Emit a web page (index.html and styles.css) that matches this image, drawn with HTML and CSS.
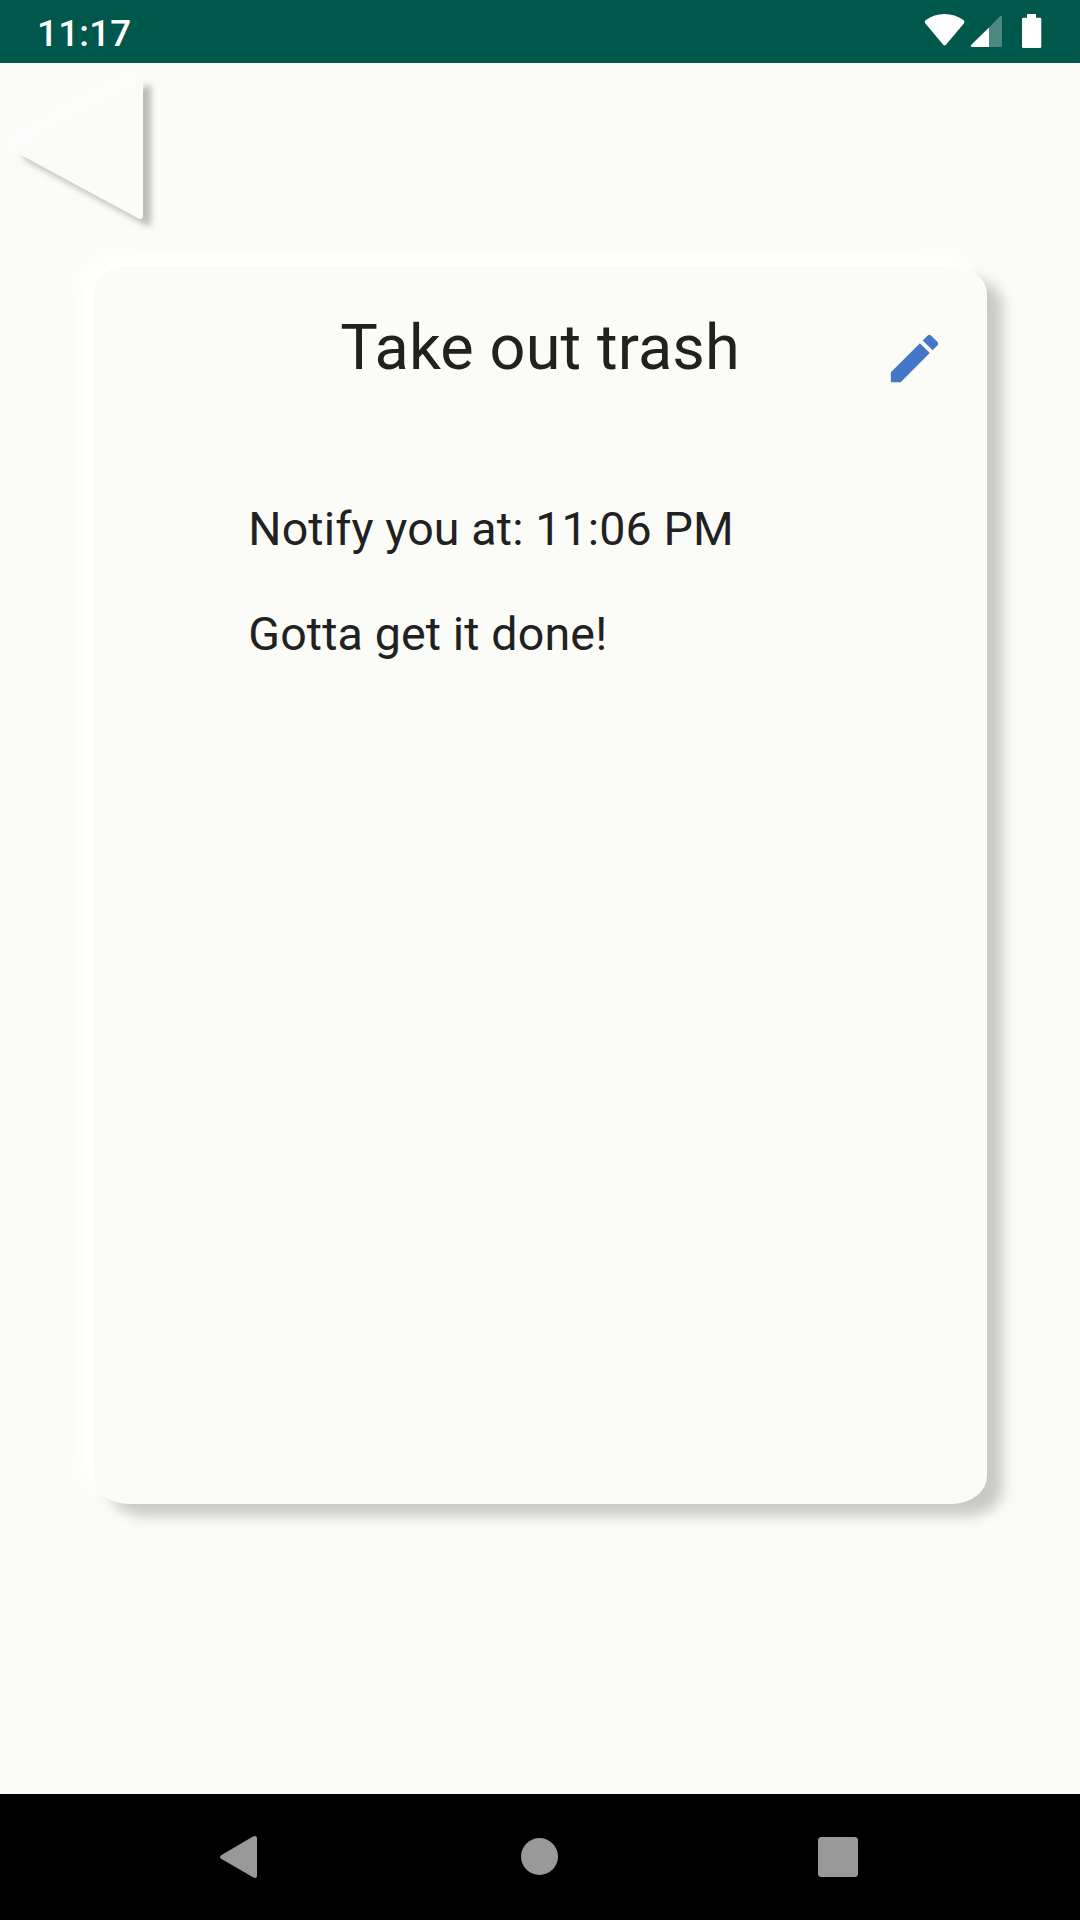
FILE: index.html
```html
<!DOCTYPE html>
<html lang="en">
<head>
<meta charset="utf-8">
<title>Take out trash</title>
<link rel="stylesheet" href="styles.css">
</head>
<body>
<div class="screen">
  <header class="status-bar">
    <span class="clock">11:17</span>
    <svg class="status-icons" viewBox="920 0 130 63" aria-hidden="true">
      <path d="M925.2 23.2Q924 21.300 925.8 20Q934 14 944.500 14T963.500 20Q965.300 21.300 964 23.200L946 44.800Q944.600 46.400 943.200 44.800Z"/>
      <path class="dim" d="M989 27.500L1000 16.200Q1002 15 1002 17.500V46Q1002 47 1001 47H989Z"/>
      <path d="M989 27.500V47H972Q970 46.500 971.300 44.800Z"/>
      <path d="M1027 14H1036V17.700H1040Q1041.300 17.700 1041.300 19V46.700Q1041.300 48 1040 48H1023.300Q1022 48 1022 46.700V19Q1022 17.700 1023.300 17.700H1027Z"/>
    </svg>
  </header>
  <main class="content">
    <button class="back" aria-label="Back">
      <svg class="back-icon" viewBox="0 63 160 172">
        <path d="M138 78.500Q143 76 143 81V215Q143 220.500 138 218.300L20 154.500Q10 148 20 141.700Z"/>
      </svg>
    </button>
    <article class="card">
      <div class="card-head">
        <h1 class="title">Take out trash</h1>
        <button class="edit" aria-label="Edit">
          <svg class="edit-icon" viewBox="0 0 24 24"><path d="M3 17.250V21h3.750L17.810 9.940l-3.750-3.750L3 17.250zM20.710 7.040c.39-.39.39-1.020 0-1.410l-2.340-2.340c-.39-.39-1.020-.39-1.410 0l-1.830 1.830 3.750 3.750 1.830-1.830z"/></svg>
        </button>
      </div>
      <div class="details">
        <p class="line">Notify you at: 11:06 PM</p>
        <p class="line">Gotta get it done!</p>
      </div>
    </article>
  </main>
  <nav class="nav-bar">
    <svg class="nav-icons" viewBox="0 1794 1080 126" aria-hidden="true">
      <path d="M253 1836.600Q257 1834.500 257 1839V1875Q257 1879.500 253 1877.300L221.500 1859Q218.500 1857 221.500 1855Z"/>
      <circle cx="539.500" cy="1856.500" r="18.500"/>
      <rect x="818" y="1837" width="40" height="40" rx="3.500"/>
    </svg>
  </nav>
</div>
</body>
</html>
```
FILE: styles.css
```css
* { box-sizing: border-box; }
body { margin: 0; font-family: Roboto, sans-serif; }
.screen {
  width: 1080px;
  height: 1920px;
  display: flex;
  flex-direction: column;
  background: #fbfcf7;
  color: #21211f;
  overflow: hidden;
}
button { padding: 0; border: 0; background: none; display: block; }
svg { display: block; }

.status-bar {
  height: 63px;
  flex: none;
  display: flex;
  justify-content: space-between;
  background: #00574b;
  color: #fff;
}
.clock {
  margin-left: 37px;
  font-size: 36.75px;
  font-weight: 500;
  line-height: 68px;
  letter-spacing: .25px;
}
.status-icons { width: 130px; height: 63px; margin-right: 30px; fill: #fff; }
.dim { opacity: .3; }

.content { flex: 1; }
.back { width: 160px; height: 172px; }
.back-icon {
  width: 160px;
  height: 172px;
  overflow: visible;
  fill: #fbfcf7;
  filter: drop-shadow(8px 7px 3px rgba(0, 0, 0, .25)) drop-shadow(-6px -7px 2px #fcfcfc);
}

.card {
  width: 893.5px;
  height: 1238px;
  margin: 31px 0 0 93.3px;
  padding-top: 44px;
  border-radius: 35px / 28px;
  background: #fbfcf7;
  box-shadow: 16px 12px 14px rgba(0, 0, 0, .2), -13px -10px 15px rgba(255, 255, 255, .95);
}
.card-head {
  display: grid;
  grid-template-columns: 104px 1fr 104px;
  align-items: start;
}
.title {
  grid-column: 2;
  margin: 0;
  font-size: 63px;
  font-weight: 400;
  line-height: 76px;
  letter-spacing: .12px;
  text-align: center;
  white-space: nowrap;
}
.edit { margin-top: 17px; }
.edit-icon { width: 63px; height: 63px; fill: #4477c7; }
.details {
  display: flex;
  flex-direction: column;
  gap: 49px;
  margin: 111px 0 0 154px;
}
.line {
  margin: 0;
  padding-left: 1px;
  font-size: 46.6px;
  line-height: 56px;
  letter-spacing: .12px;
}

.nav-bar { height: 126px; flex: none; background: #000; }
.nav-icons { width: 1080px; height: 126px; fill: #999; }
```
